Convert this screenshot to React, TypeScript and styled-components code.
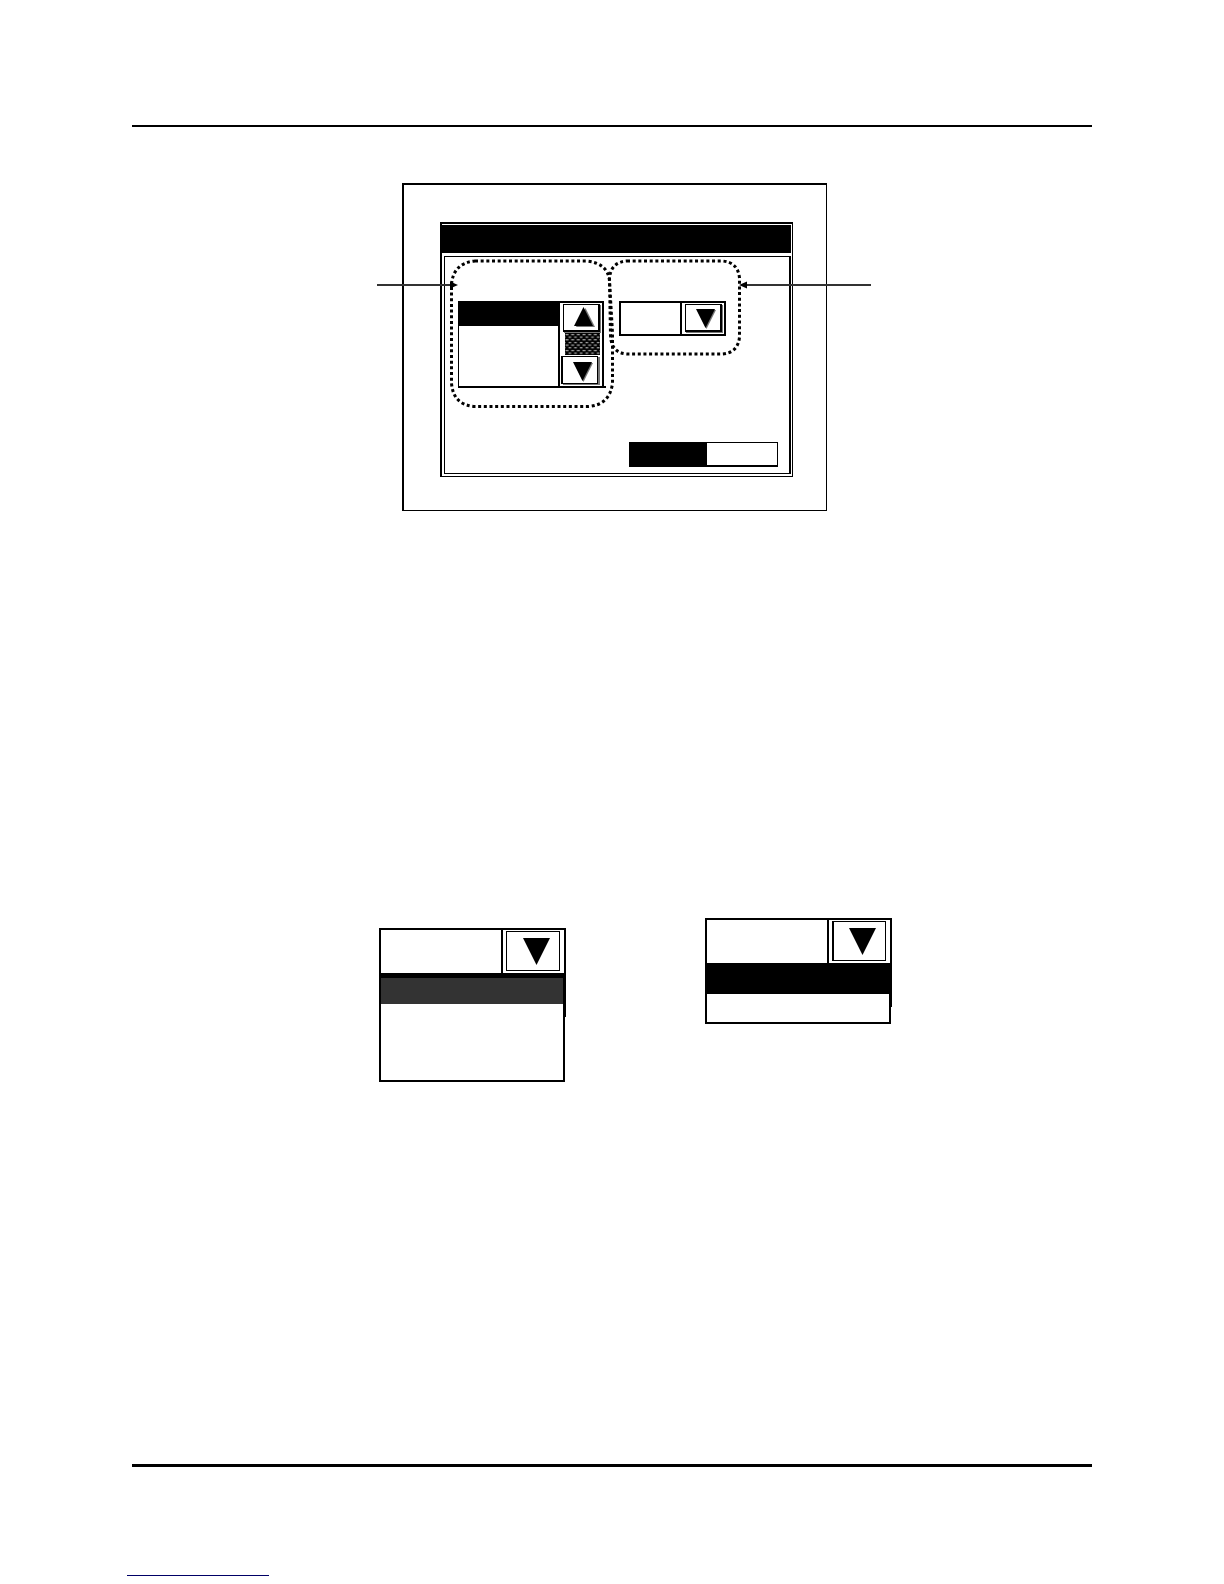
import React from "react";
import styled, { createGlobalStyle } from "styled-components";

const GlobalStyle = createGlobalStyle`
  *, *::before, *::after { box-sizing: border-box; }
  body {
    margin: 0;
    background: #fff;
    color: #000;
    font: 14px/20px "Liberation Sans", Arial, sans-serif;
  }
  button, select { font: inherit; padding: 0; margin: 0; border-radius: 0; }
`;

const Page = styled.div`
  display: flex;
  flex-direction: column;
  min-height: 100vh;
  padding-bottom: 8px;
`;

const Rule = styled.hr<{ $weight: number }>`
  height: ${(p) => p.$weight}px;
  width: auto;
  margin: 0 132px;
  border: 0;
  background: #000;
`;

const Header = styled.header`
  padding-top: 125px;
`;

const Main = styled.main`
  flex: 1;
  display: flex;
  flex-direction: column;
  gap: 407px;
  padding: 56px 132px 0;
`;

const Footer = styled.footer`
  display: flow-root;
`;

const FooterLink = styled.a`
  display: block;
  width: 142px;
  height: 1px;
  margin: 108px 0 0 127px;
  background: #000066;
`;

const PanelFigure = styled.figure`
  display: flex;
  justify-content: center;
  margin: 0;
  padding-left: 5px;
`;

const Stage = styled.div`
  position: relative;
  flex: 0 0 425px;
`;

const Bezel = styled.div`
  height: 328px;
  border: 2px solid #000;
  border-width: 2px 1px 1px 2px;
  padding: 37px 33px 33px 36px;
`;

const Screen = styled.div`
  display: flex;
  flex-direction: column;
  gap: 2px;
  height: 100%;
  border: 2px solid #000;
  border-width: 2px 1px 1px 2px;
  padding: 1px 1px 2px 0;
`;

const TitleBar = styled.div`
  height: 28px;
  background: #000;
`;

const ScreenBody = styled.div`
  flex: 1;
  display: flex;
  flex-direction: column;
  justify-content: space-between;
  margin-left: 2px;
  margin-top: 1px;
  border: 1px solid #000;
  border-right-width: 2px;
  padding: 44px 11px 6px 13px;
`;

const Fields = styled.div`
  display: flex;
  align-items: flex-start;
  gap: 15px;
`;

const ListBox = styled.div`
  position: relative;
  display: flex;
  width: 146px;
  height: 87px;
  border: 2px solid #000;
  border-left-width: 1px;

  &::after {
    content: "";
    position: absolute;
    right: -4px;
    bottom: -2px;
    width: 4px;
    height: 2px;
    background: #000;
  }
`;

const Options = styled.ul`
  flex: 1;
  margin: 0;
  padding: 0;
  list-style: none;
  border-right: 2px solid #000;
`;

const Option = styled.li<{ $height: number; $fill?: string }>`
  height: ${(p) => p.$height}px;
  background: ${(p) => p.$fill ?? "transparent"};
`;

const ScrollBar = styled.div`
  display: flex;
  flex-direction: column;
  align-items: flex-end;
  gap: 1px;
  width: 42px;
  padding: 1px 2px 0 0;
`;

const StepButton = styled.button<{ $down?: boolean; $inset?: boolean }>`
  display: flex;
  align-items: center;
  justify-content: center;
  width: 37px;
  height: 28px;
  margin-right: ${(p) => (p.$inset ? 2 : 0)}px;
  padding: ${(p) => (p.$down ? 4 : 0)}px 0 0 7px;
  background: #fff;
  border: 1px solid #000;
  border-width: ${(p) => (p.$inset ? "1px 1px 1px 2px" : "1px 2px 2px 1px")};
  box-shadow: ${(p) => (p.$inset ? 2 : 1)}px 1px 0 #777;
`;

const Track = styled.svg`
  display: block;
`;

const Combo = styled.div`
  display: flex;
  width: 107px;
  height: 35px;
  border: 2px solid #000;
`;

const ComboValue = styled.select`
  flex: 1;
  min-width: 0;
  appearance: none;
  background: #fff;
  border: 0;
  border-right: 2px solid #000;
`;

const ComboArrow = styled.div`
  display: flex;
  padding: 1px 2px 1px 3px;
`;

const Actions = styled.div`
  display: flex;
  align-self: flex-end;
  width: 149px;
  height: 25px;
  border: 1px solid #000;
  border-bottom-width: 2px;
`;

const ActionButton = styled.button<{ $primary?: boolean }>`
  flex: ${(p) => (p.$primary ? "0 0 77px" : "1")};
  border: 0;
  background: ${(p) => (p.$primary ? "#000" : "#fff")};
`;

const Callouts = styled.svg`
  position: absolute;
  top: 0;
  left: -30px;
  pointer-events: none;
`;

const MenuRow = styled.div`
  display: flex;
  justify-content: center;
  align-items: flex-start;
  gap: 139px;
  padding-left: 47px;
`;

const MenuColumn = styled.div<{ $lowered?: boolean }>`
  flex: 0 0 187px;
  padding-top: ${(p) => (p.$lowered ? 10 : 0)}px;
`;

const MenuHead = styled.div`
  display: flex;
  height: 45px;
  border: 2px solid #000;
  border-bottom: 0;
`;

const MenuArrow = styled.div`
  width: 61px;
  padding: 1px 3px;
`;

const MenuButton = styled.button<{ $heavy?: boolean }>`
  display: flex;
  align-items: center;
  justify-content: center;
  width: 54px;
  height: 40px;
  padding: 2px 0 0 7px;
  background: #fff;
  border: 1px solid #000;
  border-left-width: ${(p) => (p.$heavy ? 2 : 1)}px;
`;

const MenuDrop = styled.div<{ $shade: number }>`
  padding-right: 1px;
  background: linear-gradient(#000, #000) right top / 2px ${(p) => p.$shade}px no-repeat;
`;

const MenuList = styled.ul<{ $lid: number }>`
  margin: 0;
  padding: 0;
  list-style: none;
  border: 2px solid #000;
  border-top-width: ${(p) => p.$lid}px;
`;

function Arrow({ up, shadow, size }: { up?: boolean; shadow?: boolean; size: number }) {
  const points = up
    ? `${size / 2},0 ${size},${size} 0,${size}`
    : `0,0 ${size},0 ${size / 2},${size}`;
  return (
    <svg
      width={shadow ? size + 3 : size + 1}
      height={shadow ? size + 2 : size + 1}
      aria-hidden="true"
    >
      {shadow && (
        <polygon points={points} fill="#777" transform={up ? "translate(2 1)" : "translate(1 1)"} />
      )}
      <polygon points={points} fill="#000" />
    </svg>
  );
}

function DropMenu({
  label, lowered, heavy, lid, shade, rows,
}: {
  label: string;
  lowered?: boolean;
  heavy?: boolean;
  lid: number;
  shade: number;
  rows: { height: number; fill?: string }[];
}) {
  return (
    <MenuColumn $lowered={lowered}>
      <MenuHead>
        <ComboValue aria-label={label}>
          <option />
        </ComboValue>
        <MenuArrow>
          <MenuButton $heavy={heavy} aria-label={`Open ${label}`}>
            <Arrow size={27} />
          </MenuButton>
        </MenuArrow>
      </MenuHead>
      <MenuDrop $shade={shade}>
        <MenuList $lid={lid}>
          {rows.map((row, i) => (
            <Option key={i} $height={row.height} $fill={row.fill} />
          ))}
        </MenuList>
      </MenuDrop>
    </MenuColumn>
  );
}

export default function App() {
  return (
    <>
      <GlobalStyle />
      <Page>
        <Header>
          <Rule $weight={2} />
        </Header>
        <Main>
          <PanelFigure>
            <Stage>
              <Bezel>
                <Screen>
                  <TitleBar />
                  <ScreenBody>
                    <Fields>
                      <ListBox>
                        <Options aria-label="Items">
                          <Option $height={23} $fill="#000" />
                          <Option $height={20} />
                          <Option $height={20} />
                          <Option $height={20} />
                        </Options>
                        <ScrollBar>
                          <StepButton aria-label="Scroll up">
                            <Arrow up shadow size={19} />
                          </StepButton>
                          <Track width="35" height="22" aria-hidden="true">
                            <defs>
                              <pattern id="weave" width="5.67" height="5.33" patternUnits="userSpaceOnUse">
                                <rect width="6" height="6" fill="#000" />
                                <path d="M0.5 1.5h3M3.500 4.200h2.2M0 4.200h0.5" stroke="#eee" />
                              </pattern>
                            </defs>
                            <rect width="35" height="22" fill="url(#weave)" />
                          </Track>
                          <StepButton $down $inset aria-label="Scroll down">
                            <Arrow shadow size={19} />
                          </StepButton>
                        </ScrollBar>
                      </ListBox>
                      <Combo>
                        <ComboValue aria-label="Value">
                          <option />
                        </ComboValue>
                        <ComboArrow>
                          <StepButton $down aria-label="Open value list">
                            <Arrow shadow size={19} />
                          </StepButton>
                        </ComboArrow>
                      </Combo>
                    </Fields>
                    <Actions>
                      <ActionButton $primary aria-label="Confirm" />
                      <ActionButton aria-label="Cancel" />
                    </Actions>
                  </ScreenBody>
                </Screen>
              </Bezel>
              <Callouts width="500" height="328" viewBox="-30 0 500 328" aria-hidden="true">
                <g fill="none" stroke="#000" strokeWidth="3" strokeDasharray="3 2.67">
                  <path d="M73 78H184Q206 80 207.500 98L210.500 150V200Q208 222 186 223.500H73Q51 222 49.500 200V102Q51 80 73 78Z" />
                  <path d="M225 78H320Q336 79 337.500 95V154Q336 170 320 171H225Q209 170 208.500 152L207.500 95Q209 79 225 78Z" />
                </g>
                <path d="M-25 102H50M341 102H469" stroke="#333" strokeWidth="2" />
                <path d="M48 98.500L56 102L48 105.500ZM345 98.500L337 102L345 105.500Z" />
              </Callouts>
            </Stage>
          </PanelFigure>
          <MenuRow>
            <DropMenu
              label="first menu"
              lowered
              lid={5}
              shade={44}
              rows={[{ height: 26, fill: "#333" }, { height: 38 }, { height: 38 }]}
            />
            <DropMenu
              label="second menu"
              heavy
              lid={2}
              shade={44}
              rows={[{ height: 29, fill: "#000" }, { height: 28 }]}
            />
          </MenuRow>
        </Main>
        <Footer>
          <Rule $weight={3} />
          <FooterLink href="#" aria-label="Website" />
        </Footer>
      </Page>
    </>
  );
}
